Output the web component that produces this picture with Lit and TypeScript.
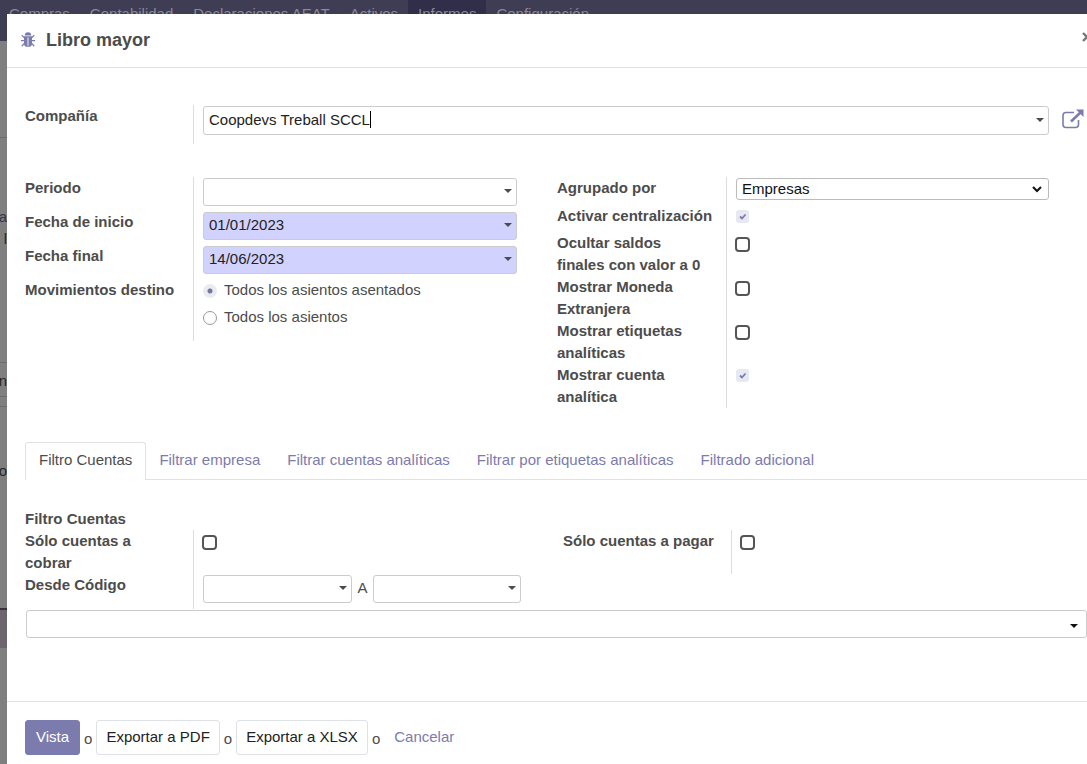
import { LitElement, html, css, svg, nothing } from "lit";
import { customElement, property } from "lit/decorators.js";
import { classMap } from "lit/directives/class-map.js";

const caretDown = svg`<path d="M0 0h8L4 4z" fill="currentColor"/>`;

@customElement("combo-field")
class ComboField extends LitElement {
  @property() label = "";
  @property() value = "";
  @property({ type: Boolean }) required = false;
  @property({ type: Boolean }) active = false;
  @property({ type: Boolean }) tags = false;

  static styles = css`
    :host { display: block; min-width: 0; }
    .box {
      display: flex; align-items: center; box-sizing: border-box; height: 28px;
      padding: 0 4px 2px 5px; border: 1px solid #ccc; border-radius: 3px;
      background: #fff; color: #4c4c4c;
    }
    .box.required { background: #d2d2ff; }
    .box.active { height: 29px; }
    .box.tags { padding: 4px 8px 0 5px; color: #111; }
    input {
      flex: 1; min-width: 0; height: 22px; padding: 0; border: 0; outline: 0;
      background: transparent; color: #222; font: inherit;
    }
    .active input { flex: none; field-sizing: content; }
    .cursor { width: 1px; height: 17px; background: #000; }
    svg { flex: none; margin-left: auto; }
  `;

  render() {
    return html`<div class=${classMap({ box: true, required: this.required, active: this.active, tags: this.tags })}>
      <input type="text" aria-label=${this.label} .value=${this.value} />
      ${this.active ? html`<span class="cursor"></span>` : nothing}
      <svg width="8" height="4" viewBox="0 0 8 4" aria-hidden="true">${caretDown}</svg>
    </div>`;
  }
}

const menu = ["Compras", "Contabilidad", "Declaraciones AEAT", "Activos", "Informes", "Configuración"];
const tabs = ["Filtro Cuentas", "Filtrar empresa", "Filtrar cuentas analíticas", "Filtrar por etiquetas analíticas", "Filtrado adicional"];
const options = [
  { id: "central", text: "Activar centralización", locked: true, short: true },
  { id: "zero", text: "Ocultar saldos finales con valor a 0" },
  { id: "currency", text: "Mostrar Moneda Extranjera" },
  { id: "tags", text: "Mostrar etiquetas analíticas" },
  { id: "account", text: "Mostrar cuenta analítica", locked: true },
];

@customElement("app-root")
class AppRoot extends LitElement {
  static styles = css`
    :host {
      display: block; position: relative; min-height: 100vh; overflow: hidden;
      background: #7f7f7f; color: #4c4c4c;
      font: 15px/22px "Liberation Sans", Arial, sans-serif;
    }
    a { color: #7c7bad; text-decoration: none; }
    .nav { display: flex; height: 41px; background: #3e3d53; }
    .nav a { padding: 0 10px; line-height: 28px; color: #8b8a96; white-space: nowrap; }
    .nav a:first-child { padding-left: 9px; }
    .nav a.current { background: #302e49; }

    .behind { display: flex; flex-direction: column; width: 7px; color: #262626; }
    .behind div { display: flex; justify-content: flex-end; box-sizing: border-box; }
    .top { height: 97px; border-bottom: 1px solid #6b6b6b; }
    .crumb { height: 90px; align-items: flex-end; color: #35344f; }
    .side { height: 135px; border-bottom: 1px solid #6b6b6b; }
    .cell { height: 34px; padding-top: 7px; border-bottom: 1px solid #6b6b6b; }
    .gap { height: 10px; border-bottom: 1px solid #6b6b6b; }
    .note { height: 203px; padding-top: 53px; border-bottom: 2px solid #3a2f3a; }
    .band { height: 38px; background: #6d656d; }

    .modal {
      position: absolute; inset: 14px -18px 0 7px; background: #fff;
      display: flex; flex-direction: column;
    }
    header {
      display: flex; align-items: center; gap: 10px; box-sizing: border-box;
      height: 54px; padding: 0 18px 1px 13px; border-bottom: 1px solid #dee2e6;
    }
    h1 { margin: 0; font-size: 18px; line-height: 26px; flex: 1; }
    .close { border: 0; padding: 0; background: none; color: #777; line-height: 0; margin: 0 -5px 6px 0; }
    .body { flex: 1; padding: 37px 18px 0; }
    .group { padding-right: 38px; }
    .row { display: grid; grid-template-columns: 168px minmax(0, 1fr); }
    .wide .row { grid-template-columns: 169px minmax(0, 1fr); }
    .row > label, .row > .label { font-weight: bold; padding-right: 16px; }
    .value { border-left: 1px solid #ddd; padding: 1px 0 0 9px; }
    .company { position: relative; min-height: 38px; }
    .open {
      position: absolute; right: 3px; top: 4px; border: 0; padding: 0;
      background: none; color: #7c7bad; line-height: 0;
    }
    .columns { display: grid; grid-template-columns: 1fr 1fr; column-gap: 2px; margin-top: 33px; align-items: start; }
    .field { height: 34px; }
    .choices { height: 62px; }
    .radio { display: flex; align-items: center; gap: 7px; height: 27px; }
    .choices .value { padding-top: 0; }
    .radio:first-child { height: 21px; padding-bottom: 3px; }
    input[type="radio"], input[type="checkbox"] { appearance: none; margin: 0; flex: none; box-sizing: border-box; }
    input[type="radio"] { width: 14px; height: 14px; border: 1px solid #999; border-radius: 50%; margin-top: 2px; }
    input[type="radio"]:checked { border: 0; background: radial-gradient(circle, #7674a4 0 2px, #e9ecef 3px); }
    input[type="checkbox"] { display: block; width: 15px; height: 15px; border: 2px solid #555; border-radius: 4px; margin: 4px 0 0 -1px; background: #fff; }
    input[type="checkbox"]:disabled {
      width: 13px; height: 13px; margin: 4px 0 0; border: 0; border-radius: 3px;
      background: #e6e8f2 url("data:image/svg+xml,%3Csvg xmlns='http://www.w3.org/2000/svg' viewBox='0 0 13 13'%3E%3Cpath d='M4 6.5l2 2 3.500-4' fill='none' stroke='%237c7bad' stroke-width='1.800'/%3E%3C/svg%3E");
    }
    .select { height: 28px; }
    .short { height: 27px; white-space: nowrap; }
    .tall { height: 44px; }
    .picker { display: grid; align-items: center; }
    .picker select, .picker svg { grid-area: 1 / 1; }
    .picker svg { justify-self: end; margin-right: 7px; pointer-events: none; }
    select {
      appearance: none; width: 100%; height: 22px; padding: 0 5px; border: 1px solid #bbb;
      border-radius: 3px; background: #fff; color: #111; font: inherit; line-height: 20px;
    }
    .tabs { display: flex; margin-top: 34px; border-bottom: 1px solid #dee2e6; }
    .tabs a { padding: 6px 13px 8px; border: 1px solid transparent; border-bottom: 0; margin-right: -1px; white-space: nowrap; }
    .tabs a.current {
      color: #4c4c4c; background: #fff; border-color: #dee2e6; margin-bottom: -1px;
      padding-bottom: 9px; border-radius: 3px 3px 0 0;
    }
    .heading { margin: 28px 0 0; font-size: 15px; line-height: 22px; }
    .filters { display: grid; grid-template-columns: 538px minmax(0, 1fr); align-items: start; }
    .range { height: 35px; }
    .pair { display: grid; grid-template-columns: 149px 21px 148px; text-align: center; line-height: 26px; }
    .accounts { margin: 1px 0 0 1px; }
    footer {
      display: flex; align-items: center; gap: 4px; box-sizing: border-box; height: 63px;
      padding: 8px 18px 0; border-top: 1px solid #dee2e6; margin-top: 24px;
    }
    footer span { padding-top: 3px; }
    footer button { height: 35px; padding: 0 9px; border: 1px solid #dee2e6; border-radius: 3px; background: #fff; color: #222; font: inherit; }
    footer .primary { padding: 0 10px; background: #7c7bad; border-color: #7c7bad; color: #fff; }
    footer a { padding-left: 10px; }
  `;

  render() {
    return html`
      <nav class="nav">
        ${menu.map((m) => html`<a href="#" class=${classMap({ current: m === "Informes" })}>${m}</a>`)}
      </nav>
      <div class="behind" aria-hidden="true">
        <div class="top"></div>
        <div class="crumb">a</div>
        <div class="side">l</div>
        <div class="cell">n</div>
        <div class="gap"></div>
        <div class="note">o</div>
        <div class="band"></div>
      </div>
      <section class="modal" role="dialog" aria-labelledby="title">
        <header>
          <svg width="16" height="16" viewBox="0 0 14 14" aria-hidden="true">
            <path d="M4.200 3a2.800 2.800 0 0 1 5.600 0z" fill="#7c7bad"/>
            <path d="M3.500 3.800h7V10a3 3 0 0 1-3 3h-1a3 3 0 0 1-3-3z" fill="#7c7bad"/>
            <path d="M3.800 5 1.500 2.700M10.200 5l2.300-2.300M3.500 7.500H.8M10.500 7.500h2.700M3.800 10l-2.300 2.500M10.200 10l2.300 2.500" stroke="#7c7bad" stroke-width="1.100" fill="none"/>
            <path d="M7 4.800V12" stroke="#fff" stroke-width=".8"/>
          </svg>
          <h1 id="title">Libro mayor</h1>
          <button class="close" aria-label="Cerrar">
            <svg width="10" height="10" viewBox="0 0 10 10"><path d="M1 1l8 8M9 1L1 9" stroke="currentColor" stroke-width="2.400"/></svg>
          </button>
        </header>
        <div class="body">
          <div class="group company">
            <div class="row">
              <span class="label">Compañía</span>
              <div class="value company"><combo-field label="Compañía" value="Coopdevs Treball SCCL" active></combo-field></div>
            </div>
            <button class="open" aria-label="Abrir registro">
              <svg width="22" height="20" viewBox="0 0 22 20" fill="none" stroke="currentColor">
                <path d="M12 3.500H4a3 3 0 0 0-3 3V15.500a3 3 0 0 0 3 3h9.500a3 3 0 0 0 3-3V11" stroke-width="1.600"/>
                <path d="M9 12.500L18.500 3.500" stroke-width="2.600"/>
                <path d="M14 .5H21.500V8z" fill="currentColor" stroke="none"/>
              </svg>
            </button>
          </div>
          <div class="columns">
            <div class="group">
              ${[["Periodo", ""], ["Fecha de inicio", "01/01/2023"], ["Fecha final", "14/06/2023"]].map(
                ([name, value]) => html`<div class="row field">
                  <span class="label">${name}</span>
                  <div class="value"><combo-field label=${name} value=${value} ?required=${value !== ""}></combo-field></div>
                </div>`
              )}
              <div class="row choices">
                <span class="label">Movimientos destino</span>
                <div class="value" role="radiogroup" aria-label="Movimientos destino">
                  <label class="radio"><input type="radio" name="moves" checked />Todos los asientos asentados</label>
                  <label class="radio"><input type="radio" name="moves" />Todos los asientos</label>
                </div>
              </div>
            </div>
            <div class="group wide">
              <div class="row select">
                <label for="grouped">Agrupado por</label>
                <div class="value"><div class="picker">
                  <select id="grouped"><option>Empresas</option></select>
                  <svg width="10" height="7" viewBox="0 0 10 7" aria-hidden="true"><path d="M1 1l4 4 4-4" fill="none" stroke="#111" stroke-width="2"/></svg>
                </div></div>
              </div>
              ${options.map(
                (o) => html`<div class="row ${o.short ? "short" : "tall"}">
                  <label for=${o.id}>${o.text}</label>
                  <div class="value"><input type="checkbox" id=${o.id} ?checked=${!!o.locked} ?disabled=${!!o.locked} /></div>
                </div>`
              )}
            </div>
          </div>
          <nav class="tabs">
            ${tabs.map((t, i) => html`<a href="#" class=${classMap({ current: i === 0 })}>${t}</a>`)}
          </nav>
          <h2 class="heading">Filtro Cuentas</h2>
          <div class="filters">
            <div>
              <div class="row tall">
                <label for="receivable">Sólo cuentas a cobrar</label>
                <div class="value"><input type="checkbox" id="receivable" /></div>
              </div>
              <div class="row range">
                <span class="label">Desde Código</span>
                <div class="value"><div class="pair">
                  <combo-field label="Desde Código"></combo-field>A<combo-field label="A código"></combo-field>
                </div></div>
              </div>
            </div>
            <div class="row tall">
              <label for="payable">Sólo cuentas a pagar</label>
              <div class="value"><input type="checkbox" id="payable" /></div>
            </div>
          </div>
          <combo-field class="accounts" label="Cuentas" tags></combo-field>
        </div>
        <footer>
          <button class="primary">Vista</button><span>o</span>
          <button>Exportar a PDF</button><span>o</span>
          <button>Exportar a XLSX</button><span>o</span>
          <a href="#">Cancelar</a>
        </footer>
      </section>
    `;
  }
}
